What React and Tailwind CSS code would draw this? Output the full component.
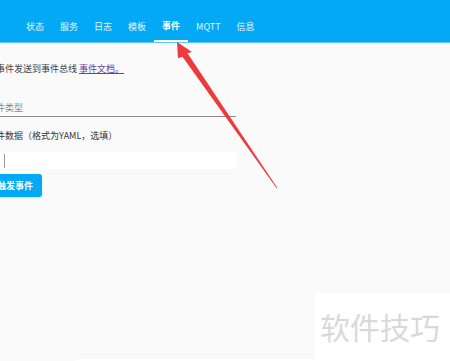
export default function App() {
  const tabs = ["状态", "服务", "日志", "模板", "事件", "MQTT", "信息"];
  const font = { fontFamily: '"Noto Sans CJK SC", "Noto Sans", sans-serif' };
  return (
    <div
      className="relative w-[450px] h-[361px] overflow-hidden bg-[#fafafa]"
      style={font}
    >
      <div className="h-[42px] bg-[#03a9f4] flex items-end pl-[18px]">
        {tabs.map((t) => (
          <div
            key={t}
            className={
              t === "事件"
                ? "h-[30px] px-[8px] flex items-center text-[9px] leading-[12px] font-bold text-white border-b-2 border-white"
                : "h-[30px] px-[8px] flex items-center text-[9px] leading-[12px] text-[#e3f5fd]"
            }
          >
            {t}
          </div>
        ))}
      </div>
      <div className="h-[1px] bg-[#5cc6f6]" />

      <div className="ml-[-13px] w-[249px] flex flex-col">
        <div className="mt-[20px] text-[9px] leading-[12px] text-[#444]">
          将事件发送到事件总线{" "}
          <span className="text-[#6b3fa0] underline">事件文档。</span>
        </div>
        <div className="mt-[27px] h-[15px] border-b border-[#8a8a8a] text-[9px] leading-[12px] text-[#8a8a8a]">
          事件类型
        </div>
        <div className="mt-[13px] text-[9px] leading-[12px] text-[#333]">
          事件数据（格式为YAML，选填）
        </div>
        <div className="mt-[10px] h-[17px] bg-white flex items-center pl-[17px]">
          <div className="w-[1px] h-[14px] bg-[#9a9a9a]" />
        </div>
        <div className="mt-[5px] self-start h-[23px] pl-[10px] pr-[9px] flex items-center rounded-[3px] bg-[#03a9f4] text-white text-[9px] font-bold leading-[12px] shadow-sm">
          触发事件
        </div>
      </div>

      <svg
        className="absolute left-0 top-0 pointer-events-none"
        width="450"
        height="361"
      >
        <polygon
          points="177,42 192,52 187.5,53.3 277.4,188 276.6,188.3 182.5,56.7 178,58"
          fill="#ee3a3a"
        />
      </svg>

      <div className="absolute left-[76px] w-[239px] bottom-0 h-[2px] bg-white" />
      <div className="absolute left-[315px] top-[293px] right-0 bottom-0 bg-white">
        <div className="mt-[15px] ml-[5px] text-[30px] leading-[36px] text-[#d9d9d9] whitespace-nowrap">
          软件技巧
        </div>
      </div>
    </div>
  );
}
